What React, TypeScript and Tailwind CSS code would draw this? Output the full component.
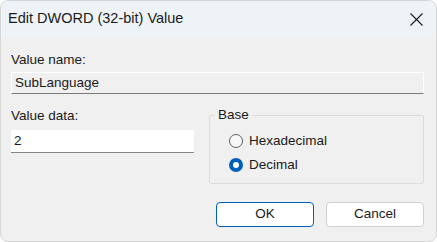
import React from 'react';

function Radio({ label, checked }: { label: string; checked?: boolean }) {
  return (
    <label className="flex items-center h-[24px] gap-[6px]">
      {checked ? (
        <span className="w-[14px] h-[14px] rounded-full bg-[#005fb8] grid place-items-center">
          <span className="w-[6px] h-[6px] rounded-full bg-white" />
        </span>
      ) : (
        <span className="w-[14px] h-[14px] rounded-full border border-[#5f5f5f] bg-[#f7f7f7]" />
      )}
      <span>{label}</span>
    </label>
  );
}

export default function App() {
  return (
    <div className="w-[437px] h-[242px] bg-white" style={{ fontFamily: '"Liberation Sans", Arial, sans-serif' }}>
      <div className="w-full h-full rounded-[8px] overflow-hidden flex flex-col bg-[#f0f0f0] text-[13.5px] text-[#1a1a1a] border border-[#d6d6d6]">
        <div className="h-[36px] shrink-0 bg-[#eef3f8] flex items-center justify-between pl-[7px] pr-[13px]">
          <span className="text-[14.5px] text-[#1b1b1b]">Edit DWORD (32-bit) Value</span>
          <svg width="13" height="13" viewBox="0 0 13 13" className="mt-[1px]">
            <path d="M0.5 0.5 L12.5 12.5 M12.5 0.5 L0.5 12.5" stroke="#1b1b1b" strokeWidth="1.1" />
          </svg>
        </div>

        <div className="flex-1 pl-[10px] pr-[12px] pt-[15px]">
          <div className="leading-[16px]">Value name:</div>
          <div className="mt-[4px] h-[22px] border border-white border-b-[#7a7a7a] bg-[#f0f0f0] flex items-center px-[3px]">
            SubLanguage
          </div>

          <div className="flex gap-[15px] mt-[13px]">
            <div className="w-[183px]">
              <div className="leading-[16px] mt-[1px]">Value data:</div>
              <div className="mt-[6px] h-[23px] bg-white border-b border-[#868686] flex items-center px-[3px]">2</div>
            </div>
            <fieldset className="flex-1 border border-[#dcdcdc] rounded-[2px] pl-[5px] pb-[6px] pt-[6px]">
              <legend className="px-[3px] leading-[16px]">Base</legend>
              <div className="pl-[14px]">
                <Radio label="Hexadecimal" />
                <Radio label="Decimal" checked />
              </div>
            </fieldset>
          </div>

          <div className="flex justify-end gap-[12px] mt-[18px]">
            <button className="w-[98px] h-[25px] rounded-[4px] bg-white border border-[#005fb8] text-[#1a1a1a]">OK</button>
            <button className="w-[98px] h-[25px] rounded-[4px] bg-white border border-[#d0d0d0] text-[#1a1a1a]">Cancel</button>
          </div>
        </div>
      </div>
    </div>
  );
}
